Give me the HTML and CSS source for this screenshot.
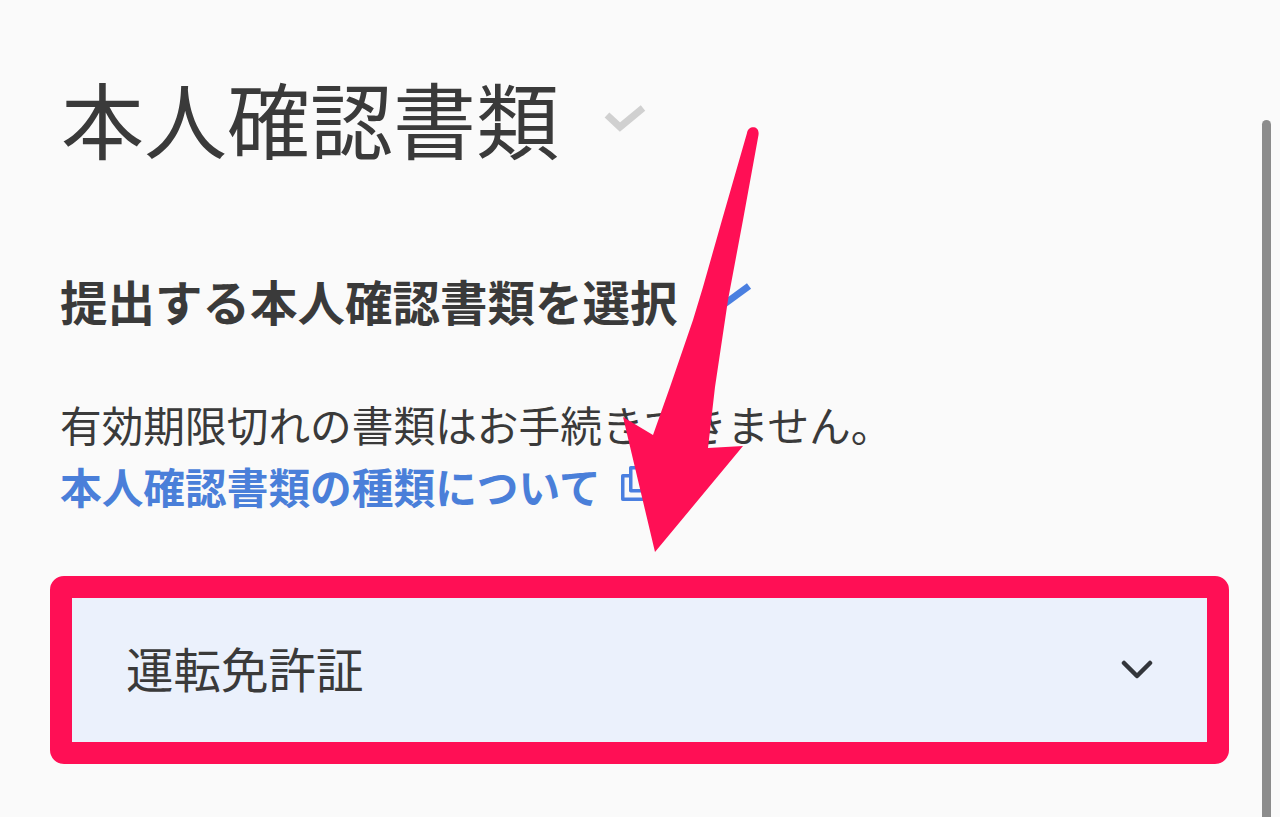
FILE: index.html
```html
<!DOCTYPE html>
<html lang="ja">
<head>
    <meta charset="UTF-8">
    <meta name="viewport" content="width=device-width, initial-scale=1.0">
    <title>本人確認書類</title>
    <link rel="stylesheet" href="styles.css">
</head>
<body>
    <div class="page">
        <div class="title-row">
            <h1>本人確認書類</h1>
            <svg class="title-check" width="42" height="30" viewBox="0 0 42 30">
                <path d="M3 12 L16 24 L39 5" fill="none" stroke="#d0d0d0" stroke-width="7"/>
            </svg>
        </div>

        <div class="sub-row">
            <h2>提出する本人確認書類を選択</h2>
            <svg class="edit-icon" width="30" height="40" viewBox="0 0 30 40">
                <path d="M0 24 L26 5" fill="none" stroke="#4a7fe0" stroke-width="7"/>
            </svg>
        </div>

        <p class="note">有効期限切れの書類はお手続きできません。</p>
        <div class="link-row">
            <a class="doc-link" href="#">本人確認書類の種類について</a>
            <svg class="copy-icon" width="36" height="40" viewBox="0 0 36 40">
                <path d="M8 9.75 H1.75 V33.25 H34 M9.75 1.75 H34 V24.75 H9.75 Z" fill="none" stroke="#4a7fe0" stroke-width="3.5" stroke-linejoin="round"/>
            </svg>
        </div>

        <div class="select-box">
            <span class="select-value">運転免許証</span>
            <svg width="32" height="22" viewBox="0 0 32 22">
                <path d="M3 4 L16 17 L29 4" fill="none" stroke="#33363b" stroke-width="4.5" stroke-linecap="round" stroke-linejoin="round"/>
            </svg>
        </div>
    </div>

    <div class="scrollbar"></div>

    <!-- arrow on top of the page -->
    <svg class="arrow" width="1280" height="817" viewBox="0 0 1280 817">
        <path d="M747 133 C748 125 760 125 758.5 135 L743 220 L728 300 L715 387 L708 448 L743 446 L655 552 L623 417 L653 435 L670 387 L693 320 L703 287 L722 220 Z" fill="#ff0f55"/>
    </svg>
</body>
</html>
```

FILE: styles.css
```css
html, body {
    height: 100%;
}
body {
    margin: 0;
    background-color: #fafafa;
    font-family: "Noto Sans CJK JP", "Noto Sans", sans-serif;
    color: #3a3a3a;
    overflow: hidden;
    position: relative;
}
.page {
    width: 1179px;
    margin-left: 50px;
    padding-top: 61px;
}
.title-row {
    display: flex;
    align-items: center;
    gap: 45px;
    padding-left: 11px;
    height: 112px;
}
h1 {
    margin: 0;
    font-size: 83px;
    font-weight: 400;
    line-height: 112px;
    white-space: nowrap;
}
.title-check {
    margin-top: 2px;
}
.sub-row {
    display: flex;
    align-items: center;
    gap: 45px;
    margin-top: 93px;
    padding-left: 10px;
    height: 70px;
}
h2 {
    margin: 0;
    font-size: 47.5px;
    font-weight: 700;
    line-height: 70px;
    white-space: nowrap;
}
.edit-icon {
    margin-top: 0;
}
.note {
    margin: 57px 0 0;
    padding-left: 10px;
    font-size: 41.7px;
    line-height: 62px;
    white-space: nowrap;
}
.link-row {
    display: flex;
    align-items: center;
    gap: 20px;
    padding-left: 10px;
    height: 62px;
}
.doc-link {
    color: #4a7fd9;
    font-size: 41.7px;
    font-weight: 700;
    text-decoration: none;
    white-space: nowrap;
}
.select-box {
    box-sizing: border-box;
    display: flex;
    align-items: center;
    justify-content: space-between;
    height: 188px;
    margin-top: 59px;
    padding: 0 54px;
    background: #ebf1fc;
    border: 22px solid #ff0f55;
    border-radius: 14px;
    font-size: 47.5px;
}
.select-value {
    margin-top: -6px;
}
.scrollbar {
    position: absolute;
    top: 120px;
    bottom: 0;
    left: 1262px;
    width: 9px;
    background: #8c8c8c;
    border-radius: 5px 5px 0 0;
}
.arrow {
    position: absolute;
    top: 0;
    left: 0;
}
```
